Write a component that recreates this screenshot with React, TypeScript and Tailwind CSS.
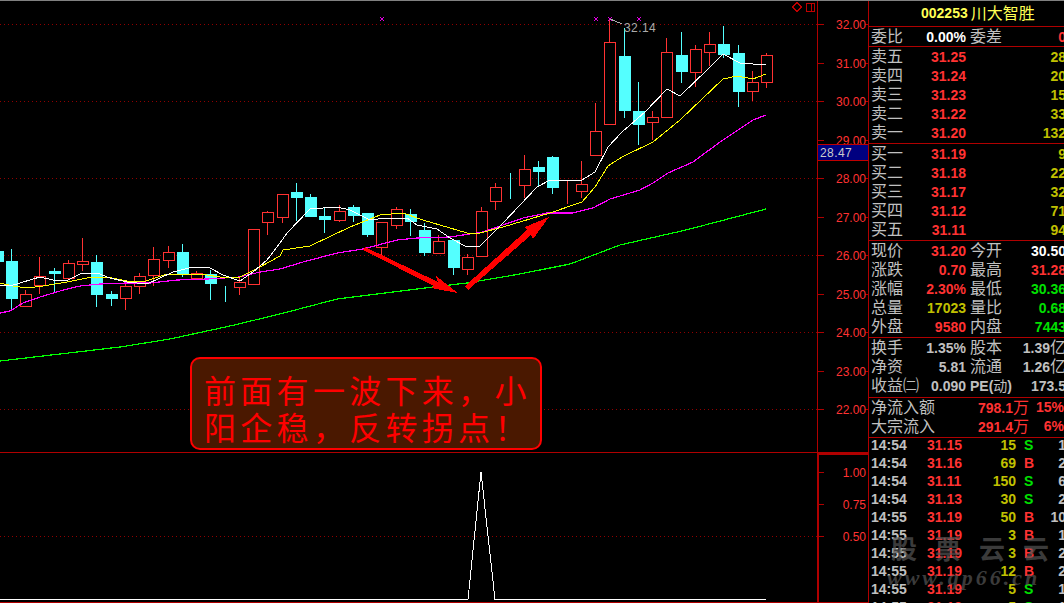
import React from "react";

const RED = "#ff3232";
const CYAN = "#54ffff";
const CJK = "font-['Liberation_Sans','Noto_Sans_CJK_SC',sans-serif]";

// kind, wick top, body top, body bottom, wick bottom (screen y)
const candles: [string, number, number, number, number][] = [
  ["c", 251, 251, 261, 261], ["c", 249, 261, 298, 310], ["r", 290, 294, 306, 306], ["r", 257, 276, 285, 293],
  ["c", 268, 271, 273, 291], ["r", 260, 263, 278, 278], ["r", 238, 261, 264, 270], ["c", 255, 262, 294, 306],
  ["c", 291, 294, 298, 305], ["r", 282, 286, 298, 309], ["r", 273, 276, 286, 293], ["r", 247, 259, 275, 285],
  ["r", 246, 252, 260, 267], ["c", 244, 252, 274, 276], ["r", 271, 273, 278, 279], ["c", 270, 274, 283, 299],
  ["c", 286, 286, 286, 301], ["r", 277, 282, 287, 294], ["r", 229, 229, 284, 284], ["r", 211, 212, 222, 234],
  ["r", 194, 194, 217, 222], ["c", 183, 192, 197, 220], ["c", 194, 197, 216, 216], ["c", 207, 216, 219, 232],
  ["r", 205, 211, 220, 221], ["c", 205, 207, 215, 221], ["c", 213, 213, 234, 236], ["r", 222, 222, 247, 255],
  ["r", 207, 209, 225, 228], ["c", 209, 214, 221, 235], ["c", 223, 230, 252, 255], ["r", 235, 241, 253, 253],
  ["c", 240, 240, 267, 274], ["r", 254, 257, 269, 274], ["r", 207, 211, 256, 256], ["r", 183, 187, 201, 209],
  ["c", 173, 186, 186, 198], ["r", 155, 169, 185, 197], ["c", 161, 167, 171, 185], ["c", 156, 157, 187, 193],
  ["r", 181, 187, 187, 203], ["r", 161, 184, 191, 197], ["r", 103, 131, 155, 155], ["r", 18, 42, 124, 124],
  ["c", 28, 56, 110, 117], ["c", 82, 111, 124, 144], ["r", 111, 117, 122, 139], ["r", 38, 52, 117, 117],
  ["c", 32, 55, 71, 82], ["r", 45, 49, 72, 86], ["r", 32, 44, 52, 65], ["c", 26, 44, 54, 57],
  ["c", 45, 53, 91, 106], ["r", 71, 82, 91, 100], ["r", 53, 55, 82, 87],
];

const ma5 = "0,285 10,286 20,283 33,279 40,277 53,280 68,280 82,273 97,273 110,278 127,282 137,283 147,284 160,278 173,272 193,267 210,268 223,275 240,281 253,272 267,260 280,243 287,233 310,209 337,207 350,210 370,220 387,218 407,218 417,225 437,229 450,238 467,247 480,246 503,223 537,187 550,180 582,180 595,172 608,147 622,132 645,112 667,89 680,96 707,70 723,54 740,63 766,65";
const ma10 = "0,283 13,286 27,288 43,286 67,282 87,278 107,277 127,281 143,282 167,274 200,274 227,278 240,277 260,267 280,256 283,250 310,246 350,227 380,215 403,213 423,220 467,233 480,233 503,227 550,213 582,202 595,187 608,166 622,157 653,142 680,120 723,79 737,76 753,79 766,74";
const ma20 = "0,313 10,311 23,303 40,297 60,291 80,286 100,284 127,283 150,283 177,280 207,279 240,277 260,272 280,269 303,262 337,253 363,249 397,240 417,238 450,237 483,232 523,218 547,213 573,213 593,208 610,199 640,190 653,183 668,173 693,162 720,142 753,120 766,115";
const ma60 = "0,361 60,354 120,347 170,339 230,326 280,314 337,299 433,287 467,283 520,274 570,264 620,245 686,230 766,209";

const priceTicks = [
  ["32.00", 24], ["31.00", 63], ["30.00", 101], ["29.00", 140], ["28.00", 178], ["27.00", 217],
  ["26.00", 255], ["25.00", 294], ["24.00", 332], ["23.00", 371], ["22.00", 409],
] as const;

const sells = [["卖五", "31.25", "28"], ["卖四", "31.24", "20"], ["卖三", "31.23", "15"], ["卖二", "31.22", "33"], ["卖一", "31.20", "132"]];
const buys = [["买一", "31.19", "9"], ["买二", "31.18", "22"], ["买三", "31.17", "32"], ["买四", "31.12", "71"], ["买五", "31.11", "94"]];

const ticks = [
  ["14:54", "31.15", "15", "S", "1"], ["14:54", "31.16", "69", "B", "2"], ["14:54", "31.11", "150", "S", "6"],
  ["14:54", "31.13", "30", "S", "2"], ["14:55", "31.19", "50", "B", "10"], ["14:55", "31.19", "3", "B", "1"],
  ["14:55", "31.19", "3", "B", "2"], ["14:55", "31.19", "12", "B", "2"], ["14:55", "31.19", "5", "S", "1"],
  ["14:55", "31.18", "5", "S", "1"],
];

function Row({ label, value, label2, value2, valueCls = "text-[#ff3232]", value2Cls = "text-[#c0c000]" }: {
  label: string; value: React.ReactNode; label2?: React.ReactNode; value2: React.ReactNode; valueCls?: string; value2Cls?: string;
}) {
  return (
    <div className="flex h-[19px] w-[197px] shrink-0 items-center pl-[2px]">
      <div className="flex w-[95px] justify-between">
        <span className="text-[16px] leading-[19px] text-[#c0c0c0]">{label}</span>
        <span className={`mt-[1px] font-bold leading-[19px] ${valueCls}`}>{value}</span>
      </div>
      <span className="ml-[4px] text-[16px] leading-[19px] text-[#c0c0c0]">{label2}</span>
      <span className={`ml-auto mt-[1px] font-bold leading-[19px] ${value2Cls}`}>{value2}</span>
    </div>
  );
}

function MainChart() {
  return (
    <svg className="block h-[451px] w-[817px]" viewBox="0 1 817 451" shapeRendering="crispEdges">
      {[24, 101, 178, 255, 332, 409].map((y) => (
        <line key={y} x1="0" x2="817" y1={y + 0.5} y2={y + 0.5} stroke="#900000" strokeDasharray="1 3" />
      ))}
      {candles.map(([kind, wt, bt, bb, wb], i) => {
        const c = Math.floor(-3 + 14.25 * i) + 0.5;
        const color = kind === "r" ? RED : CYAN;
        return (
          <g key={i}>
            <line x1={c} x2={c} y1={wt} y2={wb + 1} stroke={color} />
            <rect x={c - 5} y={bt + 0.5} width="11" height={Math.max(bb - bt, 0)} fill={kind === "r" ? "#000" : CYAN} stroke={color} />
          </g>
        );
      })}
      <g fill="none">
        <polyline points={ma60} stroke="#00ff00" strokeWidth="1.2" />
        <polyline points={ma20} stroke="#ff00ff" strokeWidth="1.2" />
        <polyline points={ma10} stroke="#ffff00" />
        <polyline points={ma5} stroke="#ffffff" />
      </g>
      <polygon points="365,247 438,282 436,276 458,293 431,288 434,286 363,250" fill="#ff0000" />
      <polygon points="465,286 527,230 525,227 549,217 533,239 531,235 468,290" fill="#ff0000" />
      <g stroke="#e000e0">
        {[382, 596, 610, 639].map((x) => (
          <path key={x} d={`M${x - 2} 17 L${x + 2} 21 M${x + 2} 17 L${x - 2} 21`} fill="none" />
        ))}
      </g>
      <path d="M610 19 L622 24" stroke="#aaaaaa" fill="none" />
      <text x="624" y="32" fill="#aaaaaa" fontSize="12" letterSpacing="0.4" fontFamily="Liberation Sans">32.14</text>
      <g stroke="#c00000" fill="none">
        <path d="M797 2.5 L801.5 7 L797 11.5 L792.5 7 Z" />
        <rect x="806.5" y="3.5" width="8" height="8" />
        <line x1="811.5" x2="811.5" y1="3" y2="12" />
      </g>
    </svg>
  );
}

function IndicatorChart() {
  return (
    <svg className="block h-[149px] w-[817px]" viewBox="0 453 817 149" shapeRendering="crispEdges">
      <line x1="0" x2="817" y1="536.5" y2="536.5" stroke="#900000" strokeDasharray="1 3" />
      <polyline points="0,599.5 468,599.5 481,472 495,599.5 766,599.5" fill="none" stroke="#ffffff" />
    </svg>
  );
}

export default function App() {
  return (
    <div className={`relative flex h-[603px] w-[1064px] overflow-hidden border-t border-[#808080] bg-black text-[14px] ${CJK}`}>
      {/* left: chart panes and their price axis */}
      <div className="flex w-[869px] shrink-0 flex-col border-r border-[#b00000]">
        <div className="flex h-[452px] shrink-0 border-b border-[#b00000]">
          <MainChart />
          <div className="relative flex-1 border-l border-[#b00000]">
            {priceTicks.map(([label, y]) => (
              <React.Fragment key={label}>
                <span className="absolute left-0 h-px w-[6px] bg-[#b00000]" style={{ top: y - 1 }} />
                <span className="absolute right-0 h-px w-[3px] bg-[#b00000]" style={{ top: y - 1 }} />
                <span className="absolute right-[2px] text-[12px] leading-[14px] text-[#ff3232]" style={{ top: y - 7 }}>{label}</span>
              </React.Fragment>
            ))}
            <div className="absolute inset-x-0 top-[143px] flex h-[17px] items-center border-y border-[#c00000] bg-[#000080] pl-[2px] text-[12px] tracking-[0.4px] text-[#cccccc]">
              28.47
            </div>
          </div>
        </div>
        <div className="flex min-h-0 flex-1 border-b border-[#b00000]">
          <IndicatorChart />
          <div className="relative flex-1 border-2 border-b-0 border-r-0 border-[#b00000]">
            {[["1.00", 472], ["0.75", 504], ["0.50", 536]].map(([label, y]) => (
              <React.Fragment key={label}>
                <span className="absolute left-0 h-px w-[5px] bg-[#b00000]" style={{ top: (y as number) - 455 }} />
                <span className="absolute right-[2px] text-[12px] leading-[14px] text-[#ff3232]" style={{ top: (y as number) - 461 }}>{label}</span>
              </React.Fragment>
            ))}
          </div>
        </div>
      </div>

      {/* right: quote panel */}
      <div className="flex min-w-0 flex-1 flex-col overflow-hidden">
        <div className="flex h-[26px] shrink-0 items-center border-b border-[#b00000] pl-[52px] text-[#ffff54]">
          <span className="font-bold">002253</span>
          <span className="ml-[3px] text-[16px]">川大智胜</span>
        </div>
        <div className="h-[20px] shrink-0 border-b border-[#b00000]">
          <Row label="委比" value="0.00%" valueCls="text-white" label2="委差" value2="0" value2Cls="text-[#ff3232]" />
        </div>
        {[sells, buys].map((rows, i) => (
          <div key={i} className="h-[97px] shrink-0 border-b border-[#b00000]">
            {rows.map(([a, b, c]) => <Row key={a} label={a} value={b} value2={c} />)}
          </div>
        ))}
        <div className="h-[97px] shrink-0 border-b border-[#b00000]">
          <Row label="现价" value="31.20" label2="今开" value2="30.50" value2Cls="text-white" />
          <Row label="涨跌" value="0.70" label2="最高" value2="31.28" value2Cls="text-[#ff3232]" />
          <Row label="涨幅" value="2.30%" label2="最低" value2="30.36" value2Cls="text-[#00e000]" />
          <Row label="总量" value="17023" valueCls="text-[#c0c000]" label2="量比" value2="0.68" value2Cls="text-[#00e000]" />
          <Row label="外盘" value="9580" label2="内盘" value2="7443" value2Cls="text-[#00e000]" />
        </div>
        <div className="h-[60px] shrink-0 border-b border-[#b00000]">
          <Row label="换手" value="1.35%" valueCls="text-[#c0c0c0]" label2="股本" value2={<>1.39<span className="text-[16px] font-normal">亿</span></>} value2Cls="text-[#c0c0c0]" />
          <Row label="净资" value="5.81" valueCls="text-[#c0c0c0]" label2="流通" value2={<>1.26<span className="text-[16px] font-normal">亿</span></>} value2Cls="text-[#c0c0c0]" />
          <Row label="收益㈡" value="0.090" valueCls="text-[#c0c0c0]" label2={<span className="text-[14px] font-bold">PE(<span className="font-normal">动</span>)</span>} value2="173.5" value2Cls="text-[#c0c0c0]" />
        </div>
        <div className="h-[40px] shrink-0 border-b border-[#b00000]">
          {[["净流入额", "798.1", "15%"], ["大宗流入", "291.4", "6%"]].map(([label, amount, pct]) => (
            <div key={label} className="flex h-[19px] w-[195px] items-center justify-between pl-[2px] font-bold leading-[19px] text-[#ff3232]">
              <span className="w-[72px] text-[16px] font-normal text-[#c0c0c0]">{label}</span>
              <span className="ml-auto">{amount}<span className="text-[16px] font-normal">万</span></span>
              <span className="w-[35px] text-right">{pct}</span>
            </div>
          ))}
        </div>
        <div className="-mt-[2px] shrink-0 font-bold">
          {ticks.map(([time, price, vol, side, count], i) => (
            <div key={i} className="flex h-[18px] w-[197px] items-center pl-[2px] leading-[18px]">
              <span className="w-[56px] text-[#c0c0c0]">{time}</span>
              <span className="w-[35px] text-[#ff3232]">{price}</span>
              <span className="w-[54px] text-right text-[#c0c000]">{vol}</span>
              <span className={`ml-[8px] w-[10px] ${side === "B" ? "text-[#ff3232]" : "text-[#00e000]"}`}>{side}</span>
              <span className="flex-1 text-right text-[#c0c0c0]">{count}</span>
            </div>
          ))}
        </div>
      </div>

      {/* callout over the chart */}
      <div className="absolute left-[190px] top-[356px] h-[93px] w-[352px] rounded-[10px] border-2 border-[#ff0000] bg-[#4a1800] pl-[12px] pt-[12px] font-['Noto_Sans_CJK_SC',sans-serif] text-[32px] font-normal leading-[37px] tracking-[4.3px] text-[#ff0000]">
        前面有一波下来，小<br />阳企稳，反转拐点！
      </div>

      {/* site watermark */}
      <div className="pointer-events-none absolute left-[887px] top-[530px] flex w-[166px] flex-col text-[#555555] opacity-70">
        <div className="flex justify-between pl-[4px] pr-[4px] font-['Noto_Sans_CJK_SC',sans-serif] text-[26px] font-bold leading-[34px]">
          <span>股</span><span>票</span><span>云</span><span>云</span>
        </div>
        <div className="font-['Liberation_Serif',serif] text-[22px] font-bold italic leading-[26px] tracking-[3px]">www.gp66.cn</div>
      </div>
    </div>
  );
}
